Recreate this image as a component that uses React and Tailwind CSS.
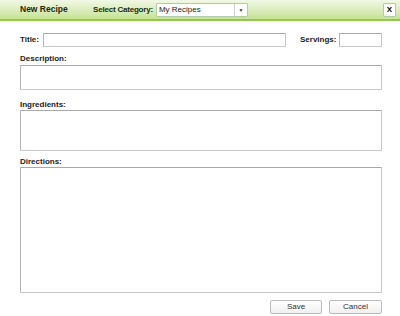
import React from "react";

const label = "h-[10px] text-[8px] font-bold text-[#222] leading-[10px]";
const field =
  "block w-full border border-[#c8c8c8] border-t-[#a9a9a9] border-l-[#b5b5b5] bg-white rounded-[1px]";

const App = () => {
  return (
    <div className="w-[400px] h-[316px] bg-white font-['Liberation_Sans',Arial,sans-serif] overflow-hidden">
      {/* header */}
      <div className="flex items-center h-[21px] px-5 bg-gradient-to-b from-[#f2f8e6] to-[#c6e295] border-b-2 border-[#94c848]">
        <span className="text-[8.5px] font-bold text-[#1f2a10] w-[73px]">New Recipe</span>
        <span className="text-[8px] tracking-[-0.2px] font-bold text-[#1f2a10]">Select Category:</span>
        <div className="flex ml-[3px] w-[92px] h-[14px] bg-white border border-[#b7c9a0] rounded-[1px]">
          <span className="flex-1 pl-[2px] text-[8px] leading-[12px] text-[#222]">My Recipes</span>
          <span className="w-[13px] border-l border-[#ccc] text-[5px] leading-[12px] text-center text-[#333]">▼</span>
        </div>
        <div className="ml-auto mr-[-16px] flex items-center justify-center w-[13px] h-[14px] bg-white border border-[#b7c9a0] rounded-[1px] text-[8px] font-bold leading-none">
          X
        </div>
      </div>

      <div className="pl-5 pr-[18px] pt-[12px]">
        {/* title row */}
        <div className="flex items-center h-[14px]">
          <span className={`${label} w-[23px]`}>Title:</span>
          <div className={`${field} !w-[243px] h-[14px]`} />
          <span className={`${label} ml-[14px] w-[39px]`}>Servings:</span>
          <div className={`${field} !w-[43px] h-[14px]`} />
        </div>

        <div className={`${label} mt-[7px]`}>Description:</div>
        <div className={`${field} mt-[1px] h-[25px]`} />

        <div className={`${label} mt-[10px]`}>Ingredients:</div>
        <div className={`${field} h-[41px]`} />

        <div className={`${label} mt-[6px]`}>Directions:</div>
        <div className={`${field} h-[126px]`} />

        <div className="flex justify-end gap-[7px] mt-[7px]">
          <button className="w-[52px] h-[14px] text-[8px] leading-none text-[#333] bg-gradient-to-b from-white to-[#f0f0f0] border border-[#bbb] rounded-[2px]">
            Save
          </button>
          <button className="w-[53px] h-[14px] text-[8px] leading-none text-[#333] bg-gradient-to-b from-white to-[#f0f0f0] border border-[#bbb] rounded-[2px]">
            Cancel
          </button>
        </div>
      </div>
    </div>
  );
};

export default App;
